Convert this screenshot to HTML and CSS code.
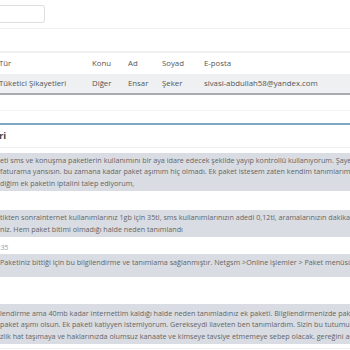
FILE: index.html
```html
<!DOCTYPE html>
<html lang="tr">
<head>
    <meta charset="UTF-8">
    <meta name="viewport" content="width=device-width, initial-scale=1.0">
    <title>Şikayet Detayı</title>
    <link rel="stylesheet" href="styles.css">
</head>
<body>

<div class="page">
    <div class="toolbar">
        <input type="text" class="search">
    </div>

    <div class="divider"></div>

    <table class="list">
        <thead>
            <tr>
                <th class="col-type">Tür</th>
                <th class="col-topic">Konu</th>
                <th class="col-name">Ad</th>
                <th class="col-surname">Soyad</th>
                <th class="col-mail">E-posta</th>
            </tr>
        </thead>
        <tbody>
            <tr>
                <td>Tüketici Şikayetleri</td>
                <td>Diğer</td>
                <td>Ensar</td>
                <td>Şeker</td>
                <td>sivasi-abdullah58@yandex.com</td>
            </tr>
        </tbody>
    </table>

    <div class="spacer"></div>

    <div class="panel">
        <div class="panel-title">ri</div>

        <div class="message first">
            eti sms ve konuşma paketlerin kullanımını bir aya idare edecek şekilde yayıp kontrollü kullanıyorum. Şayet gerekirse<br>
            faturama yansısın. bu zamana kadar paket aşımım hiç olmadı. Ek paket istesem zaten kendim tanımlarım, bilginize<br>
            diğim ek paketin iptalini talep ediyorum,
        </div>

        <div class="message second">
            tikten sonrainternet kullanımlarınız 1gb için 35tl, sms kullanımlarınızın adedi 0,12tl, aramalarınızın dakikası<br>
            niz. Hem paket bitimi olmadığı halde neden tanımlandı
        </div>
        <div class="time">:35</div>

        <div class="message reply">
            Paketiniz bittiği için bu bilgilendirme ve tanımlama sağlanmıştır. Netgsm &gt;Online işlemler &gt; Paket menüsünden
        </div>

        <div class="message third">
            lendirme ama 40mb kadar internettim kaldığı halde neden tanımladınız ek paketi. Bilgilendirmenizde paket<br>
            paket aşımı olsun. Ek paketi katiyyen istemiyorum. Gerekseydi ilaveten ben tanımlardım. Sizin bu tutumunuz<br>
            zlik hat taşımaya ve haklarınızda olumsuz kanaate ve kimseye tavsiye etmemeye sebep olacak. gereğini acil
        </div>
        <div class="panel-foot"></div>
    </div>
</div>

</body>
</html>
```

FILE: styles.css
```css
* {
    margin: 0;
    padding: 0;
    box-sizing: border-box;
}

body {
    font-family: 'Open Sans', sans-serif;
    font-size: 7.8px;
    color: #555;
    background: #fff;
    overflow: hidden;
}

.page {
    width: 700px;
    margin-left: -2px;
    padding-top: 5px;
}

.toolbar {
    height: 24px;
    border-bottom: 1px solid #f0f0f0;
}

.search {
    display: block;
    width: 60px;
    height: 18px;
    margin-left: -13px;
    border: 1px solid #ddd;
    border-radius: 3px;
}

.divider {
    height: 23px;
    border-top: 14px solid #fff;
    border-bottom: 1px solid #f0f0f0;
}

.list {
    border-collapse: collapse;
    table-layout: fixed;
    width: 600px;
    border-top: 1px solid #eee;
}

.list th,
.list td {
    text-align: left;
    font-weight: normal;
    padding: 0 4px 0 1px;
    white-space: nowrap;
}

.list th {
    height: 21px;
}

.list td {
    height: 20px;
    background: #eef0f2;
    border-bottom: 2px solid #a8acb1;
}

.col-type { width: 93px; }
.col-topic { width: 36px; }
.col-name { width: 34px; }
.col-surname { width: 42px; }
.col-mail { width: 395px; }

.spacer {
    height: 16px;
    border-bottom: 1px solid #f4f4f4;
}

.panel {
    margin-top: 12px;
    border-top: 2px solid #7ea6c5;
}

.panel-title {
    height: 23px;
    line-height: 22px;
    font-size: 9.6px;
    font-weight: bold;
    color: #444;
    padding-left: 1px;
    border-bottom: 1px solid #eee;
}

.message {
    background: #d9dce2;
    color: #666;
    font-size: 7.2px;
    line-height: 11.5px;
    padding: 2px 0 2px 2px;
    white-space: nowrap;
}

.message.first {
    margin-top: 5px;
}

.message.second {
    margin-top: 19px;
}

.message.reply {
    padding-top: 3px;
    padding-bottom: 8px;
}

.message.third {
    margin-top: 27px;
    padding-top: 4px;
}

.time {
    height: 17px;
    padding: 5px 0 0 1px;
    line-height: 12px;
    font-size: 6.6px;
    color: #999;
}

.panel-foot {
    margin-top: 4px;
    border-top: 1px solid #eee;
    height: 20px;
}
```
